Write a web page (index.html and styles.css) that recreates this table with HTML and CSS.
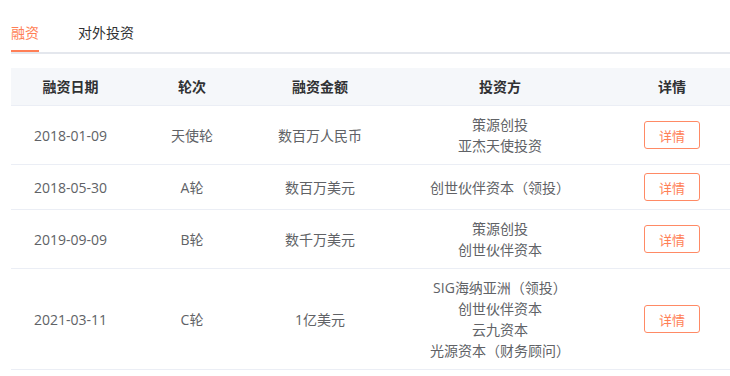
FILE: index.html
```html
<!DOCTYPE html>
<html lang="zh-CN">
<head>
<meta charset="utf-8">
<link rel="stylesheet" href="styles.css">
</head>
<body>
<div class="page">
  <div class="tabs">
    <div class="tab active">融资</div>
    <div class="tab">对外投资</div>
  </div>
  <table class="fin">
    <colgroup>
      <col class="c1"><col class="c2"><col class="c3"><col class="c4"><col class="c5">
    </colgroup>
    <thead>
      <tr><th>融资日期</th><th>轮次</th><th>融资金额</th><th>投资方</th><th>详情</th></tr>
    </thead>
    <tbody>
      <tr>
        <td>2018-01-09</td><td>天使轮</td><td>数百万人民币</td>
        <td>策源创投<br>亚杰天使投资</td>
        <td><button class="btn">详情</button></td>
      </tr>
      <tr>
        <td>2018-05-30</td><td>A轮</td><td>数百万美元</td>
        <td>创世伙伴资本（领投）</td>
        <td><button class="btn">详情</button></td>
      </tr>
      <tr>
        <td>2019-09-09</td><td>B轮</td><td>数千万美元</td>
        <td>策源创投<br>创世伙伴资本</td>
        <td><button class="btn">详情</button></td>
      </tr>
      <tr>
        <td>2021-03-11</td><td>C轮</td><td>1亿美元</td>
        <td>SIG海纳亚洲（领投）<br>创世伙伴资本<br>云九资本<br>光源资本（财务顾问）</td>
        <td><button class="btn">详情</button></td>
      </tr>
    </tbody>
  </table>
</div>
</body>
</html>
```
FILE: styles.css
```css
html, body {
  margin: 0;
  padding: 0;
  background: #fff;
}
body {
  font-family: "Open Sans", "Noto Sans CJK SC", sans-serif;
  font-size: 14px;
  color: #606266;
}
.page {
  padding: 20px 0 0 11px;
}
.tabs {
  display: flex;
  gap: 39px;
  border-bottom: 2px solid #e4e7ed;
  height: 32px;
}
.tab {
  font-size: 14px;
  line-height: 26px;
  color: #303133;
  height: 32px;
  box-sizing: border-box;
  margin-bottom: -2px;
  border-bottom: 2px solid transparent;
}
.tab.active {
  color: #ff7f56;
  border-bottom-color: #ff7f56;
}
.fin {
  margin-top: 14px;
  width: 719px;
  border-collapse: collapse;
  table-layout: fixed;
}
.c1 { width: 119px; }
.c2 { width: 124px; }
.c3 { width: 132px; }
.c4 { width: 228px; }
.c5 { width: 116px; }
.fin th {
  background: #f5f7fa;
  color: #303133;
  font-weight: bold;
  padding: 8px 0;
  line-height: 21px;
  border-bottom: 1px solid #ebeef5;
}
.fin td {
  text-align: center;
  padding: 8px 0;
  line-height: 21px;
  border-bottom: 1px solid #ebeef5;
  color: #606266;
}
.btn {
  width: 56px;
  height: 28px;
  border: 1px solid #ff8a65;
  border-radius: 3px;
  background: #fff;
  color: #ff7f56;
  font-family: "Open Sans", "Noto Sans CJK SC", sans-serif;
  font-size: 13px;
  padding: 0;
  vertical-align: middle;
}
```
